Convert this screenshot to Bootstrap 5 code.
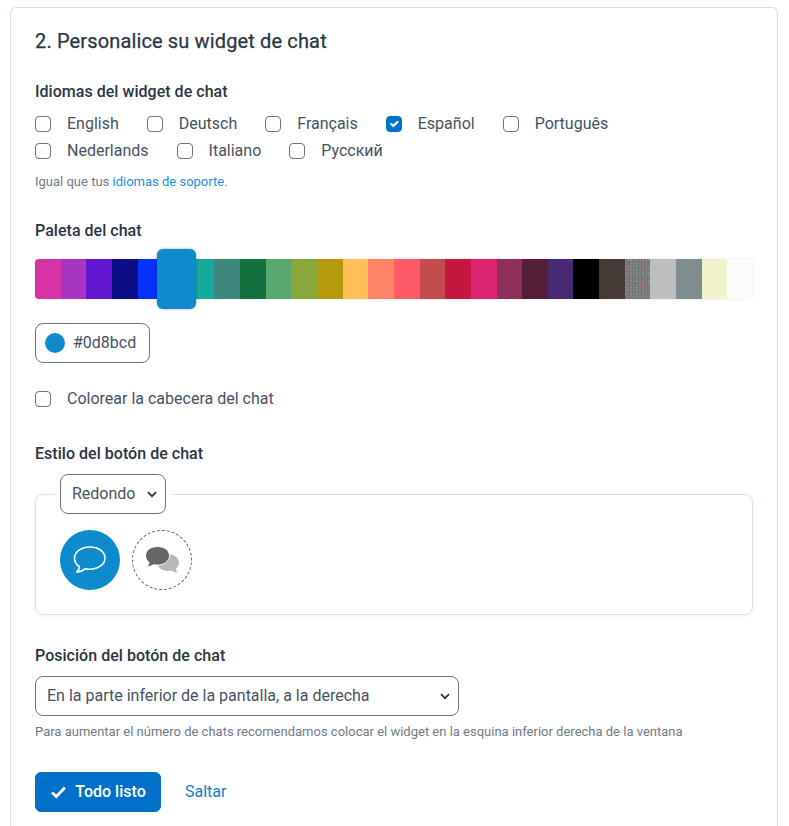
<!DOCTYPE html>
<html lang="es">
<head>
<meta charset="utf-8">
<title>Widget de chat</title>
<link href="https://cdn.jsdelivr.net/npm/bootstrap@5.3.0/dist/css/bootstrap.min.css" rel="stylesheet">
<style>
html,body{height:826px;overflow:hidden}
body{font-family:Roboto,"Liberation Sans",sans-serif;font-size:16px;color:#465262;background:#fff;padding:7px 11px 0 10px}
.setup-card{border:1px solid #d5e0ea;border-bottom:0;border-radius:6px 6px 0 0;padding:18px 24px 0;height:819px;overflow:hidden}
.setup-title{font-size:20px;font-weight:400;letter-spacing:.14px;line-height:30px;color:#2a3544;margin:0 0 24px;-webkit-text-stroke:.25px #2a3544}
.field-title{font-size:16px;font-weight:500;letter-spacing:.03px;line-height:24px;color:#2a3544;margin:0 0 8px}
.lang-row{display:flex;flex-wrap:wrap;column-gap:28px}
.lang-row+.lang-row{margin-top:3px}
.lang-item{display:flex;align-items:center;gap:16px;line-height:24px;margin:0;color:#465262}
.lang-item .form-check-input{margin:0;width:16px;height:16px;border-color:#6c757d;border-radius:4px;flex:none}
.lang-item .form-check-input:checked{background-color:#0070c9;border-color:#0070c9}
.hint-text{font-size:13px;line-height:18px;color:#6f7a85;margin:0}
.hint-text a{color:#1a8fe3;text-decoration:none}
.lang-hint{margin-top:10px;margin-bottom:28px}
.palette-strip{display:flex;height:40px;margin:16px 0 0;position:relative;box-shadow:0 0 2px rgba(0,0,0,.15);border-radius:4px 3px 3px 4px;width:718px}
.palette-strip i{flex:1 1 0;display:block}
.palette-strip i:first-child{border-radius:4px 0 0 4px}
.palette-strip i:last-child{border-radius:0 3px 3px 0}
.palette-strip .picked{position:relative}
.palette-strip .picked::after{content:"";position:absolute;left:-6px;right:-7px;top:-10px;bottom:-10px;background:#0d8bcd;border-radius:6px;box-shadow:0 0 3px rgba(0,0,0,.35)}
.noise-a{background:radial-gradient(circle,#d0484f 0 .8px,transparent 1px) 0 0/7px 8px,radial-gradient(circle,#7fa84a 0 .8px,transparent 1px) 3px 4px/6px 7px,repeating-conic-gradient(#70757a 0 25%,#82868a 0 50%) 0 0/3px 3px}
.noise-b{background:radial-gradient(circle,#6fa86a 0 .8px,transparent 1px) 4px 6px/11px 13px,#7f8c90}
.hex-box{display:flex;align-items:center;gap:8px;width:115px;height:40px;border:1px solid #6c757d;border-radius:8px;padding:0 9px;margin:24px 0 0;color:#465262;line-height:24px}
.hex-dot{width:20px;height:20px;border-radius:50%;background:#0d8bcd;flex:none}
.head-check{margin:24px 0 0}
.style-title{margin:31px 0 8px}
.style-box{border:1px solid #d5e0ea;border-radius:8px;padding:0 24px;height:141px;width:718px;margin:0;box-shadow:0 1px 4px rgba(120,150,180,.12)}
.style-box legend{float:none;width:auto;margin:0 0 0 -5px;padding:0 5px;line-height:1}
.shape-select,.pos-select{height:40px;font-size:16px;color:#465262;border-color:#6c757d;border-radius:8px;padding:0 0 0 11px;font-family:inherit;background-image:url("data:image/svg+xml,%3Csvg xmlns='http://www.w3.org/2000/svg' viewBox='0 0 10 7'%3E%3Cpath d='M1 1.200 5 5.200 9 1.200' fill='none' stroke='%232a3544' stroke-width='1.700'/%3E%3C/svg%3E");background-size:10px 7px;background-position:right 8px center}
.shape-select{width:106px;display:block}
.pos-select{width:424px}
.btn-row{display:flex;gap:12px;margin-top:16px}
.round-btn{width:60px;height:60px;border-radius:50%;display:flex;align-items:center;justify-content:center;flex:none}
.round-on{background:#0d8bcd}
.round-off{border:1px dashed #555d66}
.pos-title{margin:29px 0 8px}
.pos-hint{margin-top:7px}
.action-row{display:flex;align-items:center;gap:26px;margin-top:31px}
.done-btn{display:flex;align-items:center;gap:8px;width:126px;height:40px;justify-content:center;background:#0070c9;border-color:#0070c9;font-size:16px;font-weight:500;border-radius:6px;padding:0}
.skip-link{color:#0f7fcf;text-decoration:none;font-size:16px;margin-left:-2px}
</style>
</head>
<body>
<div class="setup-card">
  <h2 class="setup-title">2. Personalice su widget de chat</h2>

  <p class="field-title">Idiomas del widget de chat</p>
  <div class="lang-row">
    <label class="lang-item"><input class="form-check-input" type="checkbox">English</label>
    <label class="lang-item"><input class="form-check-input" type="checkbox">Deutsch</label>
    <label class="lang-item"><input class="form-check-input" type="checkbox">Français</label>
    <label class="lang-item"><input class="form-check-input" type="checkbox" checked>Español</label>
    <label class="lang-item"><input class="form-check-input" type="checkbox">Português</label>
  </div>
  <div class="lang-row">
    <label class="lang-item"><input class="form-check-input" type="checkbox">Nederlands</label>
    <label class="lang-item"><input class="form-check-input" type="checkbox">Italiano</label>
    <label class="lang-item"><input class="form-check-input" type="checkbox">Русский</label>
  </div>
  <p class="hint-text lang-hint">Igual que tus <a href="#">idiomas de soporte</a>.</p>

  <p class="field-title">Paleta del chat</p>
  <div class="palette-strip">
    <i style="background:#d633a4"></i><i style="background:#a835c0"></i><i style="background:#6116cf"></i><i style="background:#0d0d85"></i><i style="background:#0433ff"></i><i class="picked" style="background:#0d8bcd"></i><i style="background:#15aaa0"></i><i style="background:#3e877c"></i><i style="background:#14703f"></i><i style="background:#58a770"></i><i style="background:#8aa83a"></i><i style="background:#b59a0d"></i><i style="background:#ffbe57"></i><i style="background:#ff8468"></i><i style="background:#ff5a67"></i><i style="background:#c44b4f"></i><i style="background:#c4173f"></i><i style="background:#dd2470"></i><i style="background:#8e2f5c"></i><i style="background:#561f38"></i><i style="background:#472a72"></i><i style="background:#000"></i><i style="background:#463a36"></i><i class="noise-a"></i><i style="background:#bcbfbd"></i><i class="noise-b"></i><i style="background:#f1f3cc"></i><i style="background:#fbfcfb"></i>
  </div>

  <div class="hex-box"><span class="hex-dot"></span><span>#0d8bcd</span></div>

  <div class="head-check"><label class="lang-item"><input class="form-check-input" type="checkbox">Colorear la cabecera del chat</label></div>

  <p class="field-title style-title">Estilo del botón de chat</p>
  <fieldset class="style-box">
    <legend>
      <select class="form-select shape-select" aria-label="Estilo"><option>Redondo</option></select>
    </legend>
    <div class="btn-row">
      <div class="round-btn round-on">
        <svg width="34" height="28" viewBox="0 0 34 28" fill="none"><path d="M17 1C8.700 1 1.500 5.500 1.500 12c0 3.700 2 6.800 5 8.700-.2 2.100-1.200 4.200-2.700 5.400 3.200 0 6.300-1.500 8.500-3.400 1.500.3 3 .5 4.700.5 8.300 0 15-4.900 15-11.200S25.300 1 17 1Z" stroke="#fff" stroke-width="1.600" stroke-linejoin="round"/></svg>
      </div>
      <div class="round-btn round-off">
        <svg width="35" height="28" viewBox="0 0 35 28"><path d="M23 8c-6 0-11 3.700-11 8.500S17 25 23 25c1.300 0 2.500-.2 3.600-.5 1.500 1.200 3.800 2 6.400 1.900-1.200-1-1.900-2.500-2-4 1.900-1.500 3-3.500 3-5.900C34 11.700 29 8 23 8Z" fill="#b7b8b8"/><path d="M12.500 .5C5.600.5.500 4.400.5 9.700c0 2.700 1.300 5 3.500 6.700 0 1.600-.8 3-2.400 4.400 2.700.2 5.100-.7 7-2.100 1.200.3 2.500.4 3.900.4 6.900 0 12-4 12-9.400S19.400.5 12.500.5Z" fill="#666" stroke="#fff" stroke-width="1"/></svg>
      </div>
    </div>
  </fieldset>

  <p class="field-title pos-title">Posición del botón de chat</p>
  <select class="form-select pos-select" aria-label="Posición"><option>En la parte inferior de la pantalla, a la derecha</option></select>
  <p class="hint-text pos-hint">Para aumentar el número de chats recomendamos colocar el widget en la esquina inferior derecha de la ventana</p>

  <div class="action-row">
    <button type="button" class="btn btn-primary done-btn">
      <svg width="17" height="14" viewBox="0 0 17 14" fill="none"><path d="M2 7.500 6.300 11.500 15 2.500" stroke="#fff" stroke-width="2.800"/></svg>
      Todo listo
    </button>
    <a class="skip-link" href="#">Saltar</a>
  </div>
</div>
<script src="https://cdn.jsdelivr.net/npm/bootstrap@5.3.0/dist/js/bootstrap.bundle.min.js"></script>
</body>
</html>
